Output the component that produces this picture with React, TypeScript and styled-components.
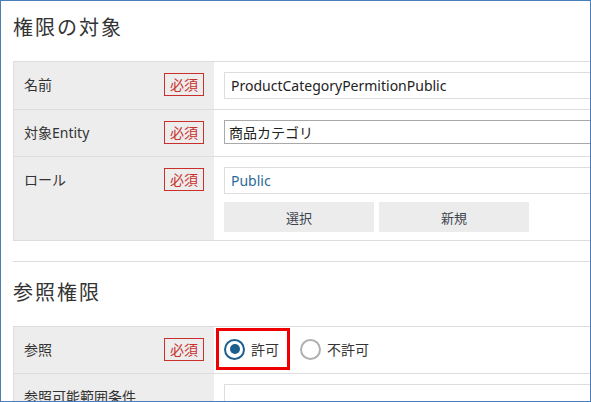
import React from "react";
import styled, { createGlobalStyle } from "styled-components";

const Global = createGlobalStyle`
  html, body { margin: 0; padding: 0; background: #fff; }
  body { font-family: "Noto Sans", "Noto Sans CJK JP", sans-serif; color: #333; }
  * { box-sizing: border-box; }
`;

const Frame = styled.div`
  width: 591px;
  height: 402px;
  border: 1px solid #4a7ebb;
  overflow: hidden;
  background: #fff;
`;

const Content = styled.div`
  padding: 11px 0 0 12px;
  width: 700px;
`;

const Heading = styled.h2<{ $top?: number }>`
  margin: ${(p) => p.$top ?? 0}px 0 19px 0;
  font-size: 20px;
  line-height: 30px;
  font-weight: normal;
  letter-spacing: 2px;
  color: #333;
  font-family: "Noto Sans CJK JP", sans-serif;
`;

const Table = styled.div`
  width: 660px;
  border: 1px solid #ddd;
  border-bottom: none;
`;

const Row = styled.div`
  display: flex;
  border-bottom: 1px solid #ddd;
`;

const LabelCell = styled.div`
  width: 200px;
  flex: none;
  background: #ededed;
  display: flex;
  align-items: flex-start;
  justify-content: space-between;
  padding: 11px 10px 0 10px;
`;

const LabelText = styled.span`
  font-size: 14px;
  line-height: 23px;
  color: #333;
  white-space: nowrap;
`;

const Badge = styled.span`
  display: inline-block;
  height: 23px;
  line-height: 21px;
  padding: 0 5px;
  border: 1px solid #c9302c;
  color: #c9302c;
  font-size: 14px;
  font-family: "Noto Sans CJK JP", sans-serif;
`;

const ValueCell = styled.div<{ $pt?: number; $pb?: number }>`
  flex: 1;
  display: flex;
  flex-direction: column;
  gap: 8px;
  padding: ${(p) => p.$pt ?? 10}px 0 ${(p) => p.$pb ?? 10}px 10px;
`;

const Input = styled.div<{ $dark?: boolean; $h?: number; $blue?: boolean }>`
  height: ${(p) => p.$h ?? 27}px;
  border: 1px solid ${(p) => (p.$dark ? "#a9a9a9" : "#ddd")};
  background: #fff;
  display: flex;
  align-items: center;
  padding-left: ${(p) => (p.$dark ? 4 : 6)}px;
  font-size: 14px;
  color: ${(p) => (p.$blue ? "#2b6b97" : "#222")};
  white-space: nowrap;
`;

const ButtonRow = styled.div`
  display: flex;
  gap: 5px;
`;

const Button = styled.button`
  width: 150px;
  height: 30px;
  border: none;
  background: #ececec;
  color: #3d4650;
  font-size: 13px;
  font-family: "Noto Sans CJK JP", sans-serif;
  padding: 0;
`;

const Separator = styled.hr`
  width: 700px;
  margin: 20px 0 0 0;
  border: none;
  border-top: 1px solid #ddd;
`;

const RadioGroup = styled.div`
  display: flex;
  align-items: center;
  height: 36px;
`;

const RadioLabel = styled.label<{ $highlight?: boolean }>`
  display: inline-flex;
  align-items: center;
  gap: 6px;
  height: 36px;
  padding: 0 ${(p) => (p.$highlight ? 8 : 0)}px 0 ${(p) => (p.$highlight ? 5 : 0)}px;
  margin-left: ${(p) => (p.$highlight ? -5 : 13)}px;
  outline: ${(p) => (p.$highlight ? "3px solid #ee0000" : "none")};
  font-size: 14px;
  font-family: "Noto Sans CJK JP", sans-serif;
  color: #333;
`;

const RadioCircle = styled.span<{ $checked?: boolean }>`
  width: 21px;
  height: 21px;
  border-radius: 50%;
  border: 2px solid ${(p) => (p.$checked ? "#1d5f8c" : "#b0b0b0")};
  background: #fff;
  display: inline-flex;
  align-items: center;
  justify-content: center;
  flex: none;
  &::after {
    content: "";
    width: 10px;
    height: 10px;
    border-radius: 50%;
    background: ${(p) => (p.$checked ? "#1d5f8c" : "transparent")};
  }
`;

const Required = () => <Badge>必須</Badge>;

export default function App() {
  return (
    <Frame>
      <Global />
      <Content>
        <Heading>権限の対象</Heading>
        <Table>
          <Row>
            <LabelCell>
              <LabelText>名前</LabelText>
              <Required />
            </LabelCell>
            <ValueCell>
              <Input>ProductCategoryPermitionPublic</Input>
            </ValueCell>
          </Row>
          <Row>
            <LabelCell>
              <LabelText>対象Entity</LabelText>
              <Required />
            </LabelCell>
            <ValueCell $pb={12}>
              <Input $dark $h={24}>商品カテゴリ</Input>
            </ValueCell>
          </Row>
          <Row>
            <LabelCell>
              <LabelText>ロール</LabelText>
              <Required />
            </LabelCell>
            <ValueCell $pb={8}>
              <Input $blue>Public</Input>
              <ButtonRow>
                <Button>選択</Button>
                <Button>新規</Button>
              </ButtonRow>
            </ValueCell>
          </Row>
        </Table>
        <Separator />
        <Heading $top={15}>参照権限</Heading>
        <Table>
          <Row>
            <LabelCell>
              <LabelText>参照</LabelText>
              <Required />
            </LabelCell>
            <ValueCell $pt={4} $pb={6}>
              <RadioGroup>
                <RadioLabel $highlight>
                  <RadioCircle $checked />
                  許可
                </RadioLabel>
                <RadioLabel>
                  <RadioCircle />
                  不許可
                </RadioLabel>
              </RadioGroup>
            </ValueCell>
          </Row>
          <Row>
            <LabelCell>
              <LabelText>参照可能範囲条件</LabelText>
            </LabelCell>
            <ValueCell>
              <Input />
            </ValueCell>
          </Row>
        </Table>
      </Content>
    </Frame>
  );
}
